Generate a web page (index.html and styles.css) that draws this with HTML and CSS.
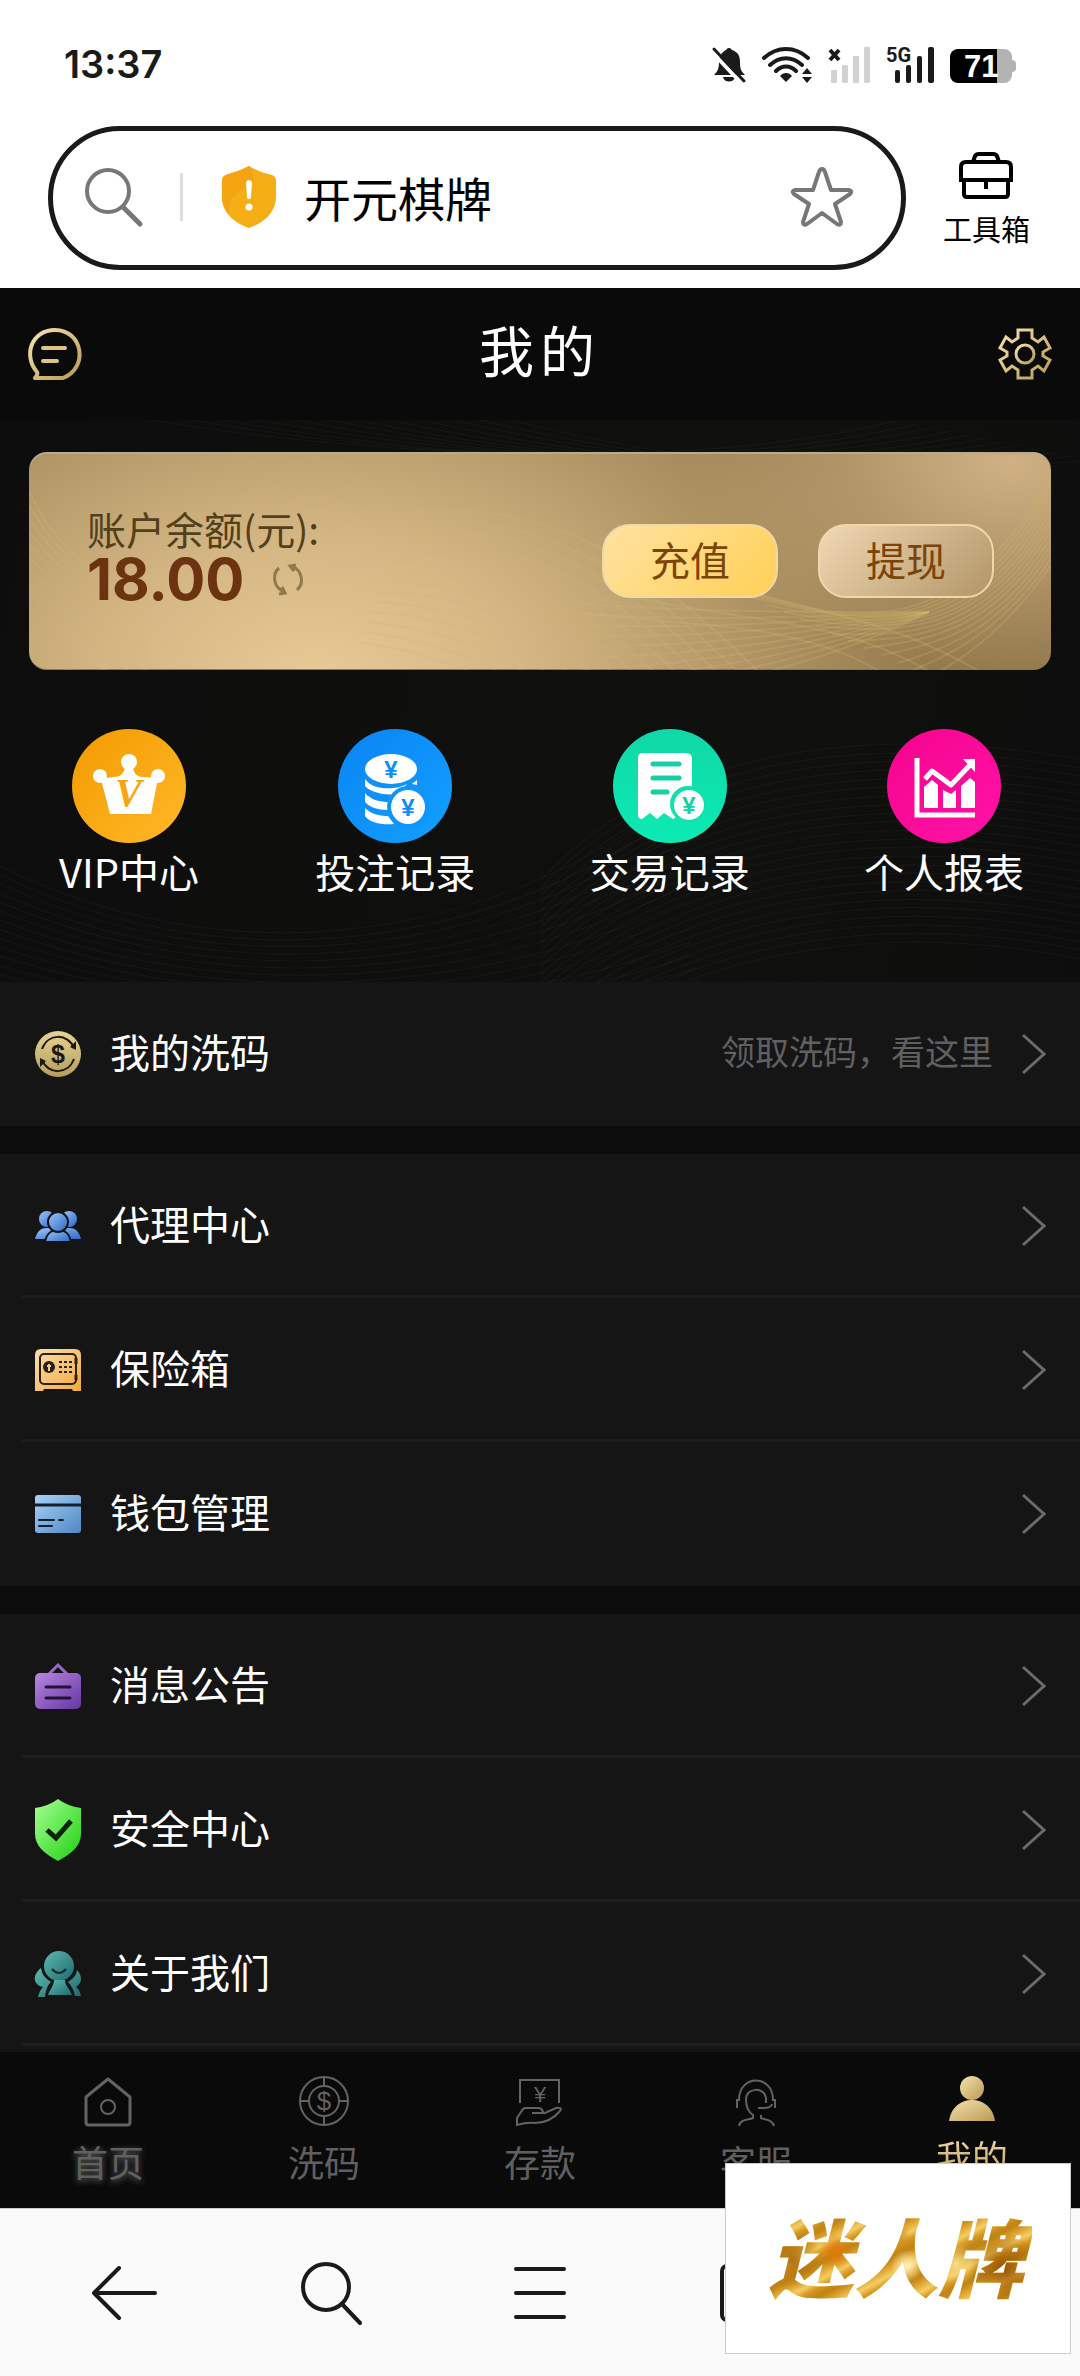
FILE: index.html
```html
<!DOCTYPE html>
<html lang="zh-CN">
<head>
<meta charset="utf-8">
<meta name="viewport" content="width=device-width, initial-scale=1">
<title>我的</title>
<link rel="stylesheet" href="styles.css">
</head>
<body>
<svg class="defs" aria-hidden="true">
  <defs>
    <linearGradient id="gold" x1="0" y1="0" x2="1" y2="1"><stop offset="0" stop-color="#f6e2b0"/><stop offset="1" stop-color="#b99a52"/></linearGradient>
    <linearGradient id="coin" x1="0" y1="0" x2="0" y2="1"><stop offset="0" stop-color="#e6d493"/><stop offset="1" stop-color="#b59c5c"/></linearGradient>
    <linearGradient id="blue" x1="0" y1="0" x2="1" y2="1"><stop offset="0" stop-color="#9fc6fb"/><stop offset="1" stop-color="#2b68c6"/></linearGradient>
    <linearGradient id="amber" x1="0" y1="0" x2="1" y2="1"><stop offset="0" stop-color="#fbdfae"/><stop offset="1" stop-color="#f3a83f"/></linearGradient>
    <linearGradient id="sky" x1="0" y1="0" x2="1" y2="1"><stop offset="0" stop-color="#a9d3f5"/><stop offset="1" stop-color="#4f86c6"/></linearGradient>
    <linearGradient id="violet" x1="0" y1="0" x2="1" y2="1"><stop offset="0" stop-color="#b888e0"/><stop offset="1" stop-color="#6535a4"/></linearGradient>
    <linearGradient id="green" x1="0" y1="0" x2="1" y2="1"><stop offset="0" stop-color="#a6ff93"/><stop offset="1" stop-color="#1fd010"/></linearGradient>
    <linearGradient id="teal" x1="0" y1="0" x2="1" y2="1"><stop offset="0" stop-color="#5cb8ae"/><stop offset="1" stop-color="#1f6a70"/></linearGradient>
    <linearGradient id="q1" x1="0" y1="0" x2="1" y2="1"><stop offset="0" stop-color="#f39a00"/><stop offset="1" stop-color="#ffb928"/></linearGradient>
    <linearGradient id="q2" x1="0" y1="0" x2="1" y2="1"><stop offset="0" stop-color="#0a84f5"/><stop offset="1" stop-color="#12a0ff"/></linearGradient>
    <linearGradient id="q3" x1="0" y1="0" x2="0" y2="1"><stop offset="0" stop-color="#10d8a6"/><stop offset="1" stop-color="#0ceab4"/></linearGradient>
    <linearGradient id="q4" x1="0" y1="0" x2="1" y2="1"><stop offset="0" stop-color="#f5048c"/><stop offset="1" stop-color="#ff12a8"/></linearGradient>
    <symbol id="chevron" viewBox="0 0 24 42"><path d="M1 2 22 21 1 40" fill="none" stroke="#6b6b6b" stroke-width="3"/></symbol>
  </defs>
</svg>

<header class="browser-top">
  <div class="status">
    <time class="clock">13:37</time>
    <div class="status-icons">
      <svg width="34" height="37" viewBox="0 0 34 37"><path d="M17 2c2 0 2 1 3 2 6 2 8 6 8 12 0 7 1 9 5 13H2c4-4 5-7 5-13 0-6 3-10 7-12 1-1 1-2 3-2z" fill="#1a1a1a"/><path d="M11 31h12c-1 6-11 6-12 0z" fill="#1a1a1a"/><path d="M-1 5 31 39" stroke="#fff" stroke-width="4"/><path d="M2 3 32 35" stroke="#1a1a1a" stroke-width="3" stroke-linecap="round"/></svg>
      <svg width="50" height="37" viewBox="0 0 50 37"><g fill="none" stroke="#1a1a1a" stroke-width="4" stroke-linecap="round"><path d="M2 12c13-12 31-12 44 0M8 19c10-9 22-9 32 0M14 25c6-6 14-6 20 0"/></g><path d="M24 36l-6-6c3-4 9-4 12 0z" fill="#1a1a1a"/><path d="M45 22l5 6h-10zM45 37l5-6h-10z" fill="#1a1a1a"/></svg>
      <svg width="42" height="37" viewBox="0 0 42 37"><path d="M2 4l9 10M11 4 2 14" stroke="#1a1a1a" stroke-width="4"/><g fill="#d2d2d2"><rect x="3" y="24" width="6" height="13" rx="1"/><rect x="14" y="19" width="6" height="18" rx="1"/><rect x="25" y="10" width="6" height="27" rx="1"/><rect x="36" y="1" width="6" height="36" rx="1"/></g></svg>
      <svg width="48" height="37" viewBox="0 0 48 37"><text x="0" y="16" class="net">5G</text><g fill="#1a1a1a"><rect x="9" y="24" width="5" height="13" rx="2"/><rect x="20" y="19" width="5" height="18" rx="2"/><rect x="31" y="10" width="5" height="27" rx="2"/><rect x="42" y="1" width="6" height="36" rx="2"/></g></svg>
      <svg width="66" height="37" viewBox="0 0 66 37"><rect x="50" y="14" width="16" height="12" rx="4" fill="#b3b3b3"/><rect x="20" y="3" width="42" height="34" rx="8" fill="#b3b3b3"/><path d="M8 3h39v34H8a8 8 0 0 1-8-8V11a8 8 0 0 1 8-8z" fill="#000"/><text x="14" y="31" class="charge">71</text></svg>
    </div>
  </div>
  <div class="address-row">
    <form class="address">
      <svg width="58" height="58" viewBox="0 0 58 58" fill="none" stroke="#777" stroke-width="4" stroke-linecap="round"><circle cx="23" cy="23" r="21"/><path d="M38 39 55 56" stroke-width="5"/></svg>
      <span class="divider"></span>
      <svg width="54" height="62" viewBox="0 0 54 62"><path d="M27 0c8 5 15 7 23 9 3 1 4 3 4 6v16c0 15-12 26-27 31C12 57 0 46 0 31V15c0-3 1-5 4-6 8-2 15-4 23-9z" fill="#f5ae15"/><path d="M27 0C15 6 8 7 4 9c-3 1-4 3-4 6v16c0 7 3 13 7 18-1-17 7-22 16-25 9-4 11-13 4-24z" fill="#f3a410"/><path d="M24 17c0-4 6-4 6 0l-1 14c0 3-4 3-4 0z" fill="#fff"/><circle cx="27" cy="41" r="3.500" fill="#fff"/></svg>
      <input class="address-input" type="text" value="开元棋牌" aria-label="搜索">
      <svg width="62" height="60" viewBox="0 0 62 60" fill="none" stroke="#777" stroke-width="4" stroke-linejoin="round"><path d="M31 2q2 0 3 3l6 18 18 0q4 1 1 4L44 37l6 18q0 4-4 2L31 46 16 57q-4 2-4-2l6-18L3 27q-3-3 1-4l18 0 6-18q1-3 3-3z"/></svg>
    </form>
    <button class="toolbox" type="button">
      <svg width="54" height="47" viewBox="0 0 54 47" fill="none" stroke="#000" stroke-width="4"><path d="M14 10l2-6q1-2 4-2h14q3 0 4 2l2 6"/><path d="M2 28V15q0-5 5-5h40q5 0 5 5v13z"/><path d="M5 28v14q0 3 3 3h38q3 0 3-3V28M27 28v9"/></svg>
      <span>工具箱</span>
    </button>
  </div>
</header>

<div class="app">
  <header class="app-header">
    <button type="button" class="icon-button" aria-label="消息"><svg width="52" height="52" viewBox="0 0 52 52" fill="none" stroke="url(#gold)" stroke-width="4"><path d="M6 50H34C60 40 54 2 26 2 2 2-6 28 8 44c1 2 0 4-2 6z" stroke-linejoin="round"/><path d="M14 20H36M14 33H28" stroke="#dcc486" stroke-linecap="round"/></svg></button>
    <h1>我的</h1>
    <button type="button" class="icon-button" aria-label="设置"><svg width="52" height="52" viewBox="0 0 52 52" fill="none" stroke="url(#gold)" stroke-width="3"><path d="M19 2h14v8l6 4 6-5 6 11-7 4v4l7 4-6 11-6-5-6 4v8H19v-8l-6-4-6 5L1 32l7-4v-4L1 20 7 9l6 5 6-4z"/><circle cx="26" cy="26" r="9"/></svg></button>
  </header>

  <section class="hero">
    <svg class="waves" id="hero-waves" viewBox="0 0 1080 561" preserveAspectRatio="none" aria-hidden="true"></svg>
    <div class="card">
      <svg class="waves" id="card-waves" viewBox="0 0 1022 218" preserveAspectRatio="none" aria-hidden="true"></svg>
      <div class="balance">
        <p class="balance-label">账户余额(元):</p>
        <p class="balance-value">18.00
          <button type="button" class="icon-button" aria-label="刷新"><svg width="30" height="30" viewBox="0 0 30 30" fill="none" stroke="#8f7a4c" stroke-width="3"><path d="M6 4C-1 10 0 23 11 28M9 23l3 6-6 1M24 26C31 20 30 7 19 2M21 7l-4-5 6-1"/></svg></button>
        </p>
      </div>
      <div class="actions">
        <button type="button" class="pill deposit">充值</button>
        <button type="button" class="pill withdraw">提现</button>
      </div>
    </div>
    <nav class="quick">
      <a href="#vip"><svg width="114" height="114" viewBox="0 0 114 114"><circle cx="57" cy="57" r="57" fill="url(#q1)"/><g fill="#fff"><circle cx="57" cy="33" r="8"/><circle cx="28" cy="47" r="7"/><circle cx="86" cy="47" r="7"/><path d="M53 38h8c1 8 5 10 11 10l14 1-7 36H38L29 50l12-2c7 0 11-3 12-10z"/></g><text x="43" y="77" class="vmark">V</text></svg>VIP中心</a>
      <a href="#bets"><svg width="114" height="114" viewBox="0 0 114 114"><circle cx="57" cy="57" r="57" fill="url(#q2)"/><g fill="#fff"><ellipse cx="53" cy="40" rx="26" ry="15"/><path d="M27 50c8 12 32 11 42 5l-9 10c-14 2-28-2-33-8zM27 64c6 7 15 9 25 9l-2 8c-10 0-19-3-23-8zM27 79c6 6 14 8 23 8l6 8c-12 1-24-1-29-8zM74 55l5-4v5z"/></g><circle cx="70" cy="78" r="21" fill="#0f95fb"/><circle cx="70" cy="78" r="17" fill="#fff"/><text x="53" y="49" class="yen yen-blue">¥</text><text x="70" y="87" class="yen yen-blue">¥</text></svg>投注记录</a>
      <a href="#trades"><svg width="114" height="114" viewBox="0 0 114 114"><circle cx="57" cy="57" r="57" fill="url(#q3)"/><path d="M30 24h43q6 0 6 6v58l-9-3-10 5-9-6-7 6-7-6-8 6q-4 0-4-4V29q0-5 5-5z" fill="#fff"/><path d="M40 35h26M40 49h26M40 63h14" stroke="#16cfa2" stroke-width="5" stroke-linecap="round"/><circle cx="75" cy="75" r="18" fill="#0fe0ac"/><path d="M62 88h18v6H62z" fill="#0fe3ae"/><circle cx="76" cy="76" r="15" fill="#fff"/><text x="76" y="85" class="yen yen-green">¥</text></svg>交易记录</a>
      <a href="#report"><svg width="114" height="114" viewBox="0 0 114 114"><circle cx="57" cy="57" r="57" fill="url(#q4)"/><g fill="none" stroke="#fff" stroke-width="5"><path d="M30 29v57h58"/><path d="M38 50l7-8 19 14 19-20" stroke-linejoin="round"/></g><g fill="#fff"><path d="M76 30h12v13zM37 58l8-7 6 5v23H37zM56 61l8 4 5-4v18H56zM74 57l9-8 5 4v26H74z"/></g></svg>个人报表</a>
    </nav>
  </section>

  <main class="menu">
    <ul class="group">
      <li><a class="row" href="#rebate"><span class="row-icon"><svg width="46" height="48" viewBox="0 0 46 48"><circle cx="23" cy="24" r="23" fill="url(#coin)"/><g fill="none" stroke="#1c1810" stroke-width="2"><path d="M7 19C13 3 33 3 39 18M39 29C33 45 13 45 7 30"/></g><path d="M41 11v9l-6-3zM5 37v-9l6 3z" fill="#1c1810"/><text x="23" y="33" class="dollar">$</text></svg></span><span class="row-label">我的洗码</span><span class="row-hint">领取洗码，看这里</span><svg class="chevron"><use href="#chevron"/></svg></a></li>
    </ul>
    <ul class="group">
      <li><a class="row" href="#agent"><span class="row-icon"><svg width="46" height="30" viewBox="0 0 46 30"><g fill="url(#blue)"><circle cx="12" cy="8" r="8"/><circle cx="34" cy="8" r="8"/><path d="M0 28c2-8 6-11 12-11h22c6 0 10 3 12 11z"/></g><g fill="url(#blue)" stroke="#151515" stroke-width="2"><path d="M10 31c2-10 7-12 13-12s11 2 13 12z"/><circle cx="23" cy="11" r="10"/></g></svg></span><span class="row-label">代理中心</span><svg class="chevron"><use href="#chevron"/></svg></a></li>
      <li><a class="row" href="#safe"><span class="row-icon"><svg width="46" height="42" viewBox="0 0 46 42"><path d="M6 0h34q6 0 6 6v36h-8l-1-2H9l-1 2H0V6q0-6 6-6z" fill="url(#amber)"/><rect x="5" y="5" width="36" height="30" rx="4" fill="none" stroke="#2a2114" stroke-width="2"/><circle cx="14" cy="18" r="6" fill="#2a2114"/><path d="M14 15v7M12 17h4" stroke="#f7c983" stroke-width="2"/><path d="M24 13h13M24 18h13M24 23h13" stroke="#2a2114" stroke-width="2" stroke-dasharray="3 2"/><path d="M41 9v6M41 26v5" stroke="#2a2114" stroke-width="3"/></svg></span><span class="row-label">保险箱</span><svg class="chevron"><use href="#chevron"/></svg></a></li>
      <li><a class="row" href="#wallet"><span class="row-icon"><svg width="46" height="38" viewBox="0 0 46 38"><rect width="46" height="38" rx="3" fill="url(#sky)"/><path d="M0 10h46" stroke="#16202c" stroke-width="3"/><path d="M4 25h15M24 25h4M4 31h13" stroke="#16202c" stroke-width="2" stroke-linecap="round"/></svg></span><span class="row-label">钱包管理</span><svg class="chevron"><use href="#chevron"/></svg></a></li>
    </ul>
    <ul class="group">
      <li><a class="row" href="#news"><span class="row-icon"><svg width="46" height="46" viewBox="0 0 46 46"><path d="M14 11l9-9 9 9" fill="none" stroke="#9a68c8" stroke-width="3"/><rect y="10" width="46" height="36" rx="5" fill="url(#violet)"/><path d="M11 24h24M11 35h24" stroke="#231036" stroke-width="3" stroke-linecap="round"/></svg></span><span class="row-label">消息公告</span><svg class="chevron"><use href="#chevron"/></svg></a></li>
      <li><a class="row" href="#security"><span class="row-icon"><svg width="46" height="62" viewBox="0 0 46 62"><path d="M23 0q9 7 23 9v26c0 12-10 20-23 27C10 55 0 47 0 35V9q14-2 23-9z" fill="url(#green)"/><path d="M12 31l9 8 15-17" fill="none" stroke="#0e220e" stroke-width="5"/></svg></span><span class="row-label">安全中心</span><svg class="chevron"><use href="#chevron"/></svg></a></li>
      <li><a class="row" href="#about"><span class="row-icon"><svg width="46" height="46" viewBox="0 0 46 46"><g fill="url(#teal)"><circle cx="24" cy="15" r="15"/><path d="M19 29h11c0 6 5 9 7 15H13c2-6 6-9 6-15z"/><path d="M6 17c1 8 6 11 10 14-4 4-5 8-6 15H3c1-4 2-7 5-10-10-2-11-12-2-19zM42 19c-1 7-5 9-9 12 4 4 6 9 7 14h6c-1-4-2-7-5-9 7-4 6-12 1-17z"/></g><path d="M17 18q7 8 14 0" fill="none" stroke="#12302f" stroke-width="2"/></svg></span><span class="row-label">关于我们</span><svg class="chevron"><use href="#chevron"/></svg></a></li>
    </ul>
  </main>

  <nav class="tabs">
    <a class="tab home" href="#home"><svg width="50" height="50" viewBox="0 0 50 50" fill="none" stroke="#636363" stroke-width="3" stroke-linejoin="round"><path d="M25 3 47 21v25q0 3-3 3H6q-3 0-3-3V21z"/><circle cx="25" cy="31" r="7" stroke-width="2"/></svg>首页</a>
    <a class="tab" href="#wash"><svg width="50" height="50" viewBox="0 0 50 50" fill="none" stroke="#636363" stroke-width="2"><circle cx="25" cy="25" r="24"/><circle cx="25" cy="25" r="15"/><path d="M25 1v9M25 40v9M1 25h9M40 25h9"/><text x="25" y="34" class="tab-glyph dollar-tab">$</text></svg>洗码</a>
    <a class="tab" href="#deposit"><svg width="50" height="50" viewBox="0 0 50 50" fill="none" stroke="#636363" stroke-width="2"><path d="M5 27V4h39v23"/><text x="25" y="26" class="tab-glyph">¥</text><path d="M2 49V42l6-9q1-1 3-1h13q4 1 4 5H17h13l11-5q7-1 4 3-10 12-25 12-8-1-18 2z"/></svg>存款</a>
    <a class="tab" href="#service"><svg width="50" height="50" viewBox="0 0 50 50" fill="none" stroke="#636363" stroke-width="2"><path d="M6 32V24h2C8-2 42-2 42 24h2v8M35 27v-5c-2-12-20-10-20 1 0 8 2 13 7 16v3c-4 2-13 1-14 8M27 32h6q7 0 8-4M30 39v3c4 2 11 1 13 8"/></svg>客服</a>
    <a class="tab active" href="#me" aria-current="page"><svg width="50" height="45" viewBox="0 0 50 45" fill="url(#gold)"><circle cx="25" cy="12" r="12"/><path d="M2 45C4 31 14 24 25 24s21 7 23 21z"/></svg><span>我的</span></a>
  </nav>
</div>

<footer class="browser-bar">
  <button type="button" aria-label="后退"><svg width="66" height="56" viewBox="0 0 66 56"><path d="M64 28H3M28 3 3 28l25 25"/></svg></button>
  <button type="button" aria-label="搜索"><svg width="62" height="64" viewBox="0 0 62 64"><circle cx="25" cy="26" r="23"/><path d="M41 43 59 62"/></svg></button>
  <button type="button" aria-label="菜单"><svg width="54" height="54" viewBox="0 0 54 54"><path d="M3 3h48M3 27h48M3 51h48"/></svg></button>
  <button type="button" aria-label="标签页"><svg width="58" height="58" viewBox="0 0 58 58"><rect x="3" y="2" width="52" height="54" rx="5"/></svg></button>
  <button type="button" aria-label="主页"><svg width="58" height="58" viewBox="0 0 58 58"><path d="M29 3 55 24v31H3V24z"/></svg></button>
</footer>

<aside class="badge"><span>迷人牌</span></aside>
<script src="waves.js"></script>
</body>
</html>
```
FILE: styles.css
```css
* { box-sizing: border-box; margin: 0; padding: 0; }

body {
  min-height: 100vh;
  display: flex;
  flex-direction: column;
  background: #0c0c0c;
  color: #fff;
  font-family: "Noto Sans CJK SC", "Noto Sans", sans-serif;
}

button { border: 0; background: none; color: inherit; font: inherit; cursor: pointer; }
a { color: inherit; text-decoration: none; }
ul { list-style: none; }
svg { display: block; flex: none; overflow: visible; }
.defs { position: absolute; width: 0; height: 0; }

/* browser chrome, top */
.browser-top { background: #fff; color: #1a1a1a; }
.status {
  display: flex;
  justify-content: space-between;
  align-items: center;
  padding: 46px 64px 43px;
}
.clock { font: 600 38px/37px Inter, sans-serif; }
.status-icons { display: flex; gap: 16px; }
.net { font: 700 20px Roboto, sans-serif; fill: #1a1a1a; }
.charge { font: 700 31px "Liberation Sans", sans-serif; fill: #fff; }

.address-row {
  display: flex;
  align-items: flex-start;
  gap: 37px;
  padding: 0 50px 18px 48px;
}
.address {
  flex: 1;
  min-width: 0;
  height: 144px;
  display: flex;
  align-items: center;
  padding: 0 48px 2px 32px;
  border: 5px solid #1a1a1a;
  border-radius: 72px;
}
.divider { flex: none; width: 3px; height: 48px; margin: 0 39px 0 37px; background: #dedede; }
.address-input {
  flex: 1;
  min-width: 0;
  height: 72px;
  padding-left: 28px;
  border: 0;
  outline: 0;
  background: none;
  color: #000;
  font: 400 47px/72px "Noto Sans CJK SC", sans-serif;
}
.toolbox {
  display: flex;
  flex-direction: column;
  align-items: center;
  gap: 9px;
  padding-top: 26px;
  color: #000;
  font-size: 29px;
  line-height: 40px;
}

/* app */
.app { flex: 1; display: flex; flex-direction: column; }
.app-header {
  height: 132px;
  display: flex;
  justify-content: space-between;
  align-items: center;
  padding: 0 29px;
  background: #0a0a0a;
}
.app-header h1 {
  padding-bottom: 12px;
  font-size: 55px;
  font-weight: 400;
  line-height: 72px;
  letter-spacing: 6px;
}

.hero {
  position: relative;
  padding: 32px 29px 86px;
  background: linear-gradient(100deg, #0d0d0d, #10100e 70%, #0d0d0d);
}
.waves { position: absolute; inset: 0; width: 100%; height: 100%; fill: none; overflow: hidden; }
#hero-waves { stroke: rgba(255, 255, 255, .04); }
#card-waves { stroke: rgba(214, 180, 112, .26); stroke-width: 2; }

.card {
  position: relative;
  overflow: hidden;
  min-height: 218px;
  display: flex;
  justify-content: space-between;
  align-items: center;
  padding: 0 57px 0 58px;
  border-radius: 18px;
  background:
    radial-gradient(ellipse 32% 95% at 96% 5%, #cfb184, rgba(207, 177, 132, 0)),
    radial-gradient(ellipse 60% 190% at 28% 105%, #e8ca95 0%, #d3b683 35%, #b39767 68%, rgba(150, 125, 80, 0) 100%),
    #947a4d;
  box-shadow: inset 0 2px 0 #b9ab90, inset 0 -1px 0 #8c7850;
}
.balance, .actions { position: relative; }
.balance { padding-bottom: 14px; }
.balance-label { color: #52401a; font-size: 39px; line-height: 50px; }
.balance-value {
  display: flex;
  align-items: center;
  gap: 29px;
  color: #6b330f;
  font: 700 58px/52px Inter, sans-serif;
}
.actions { display: flex; gap: 40px; }
.pill {
  width: 176px;
  height: 74px;
  padding-bottom: 4px;
  border: 2px solid #f0d8a8;
  border-radius: 28px;
  color: #7c4406;
  font-size: 40px;
  line-height: 64px;
}
.deposit { background: linear-gradient(135deg, #ffe2a2, #ffd055); }
.withdraw { background: linear-gradient(135deg, #f0d8b4, #b29668); }

.quick {
  position: relative;
  display: flex;
  justify-content: space-between;
  padding: 59px 27px 0 28px;
}
.quick a {
  min-width: 144px;
  display: flex;
  flex-direction: column;
  align-items: center;
  gap: 3px;
  font-size: 40px;
  line-height: 50px;
}
.vmark { font: italic 700 40px "Liberation Serif", serif; fill: #f8a610; }
.yen { font: 700 24px "Liberation Sans", sans-serif; text-anchor: middle; }
.yen-blue { fill: #0c8df8; }
.yen-green { fill: #16cfa2; }

/* list */
.menu { display: flex; flex-direction: column; gap: 28px; flex: 1; }
.group { background: #151515; }
.group:last-child { flex: 1; padding-bottom: 5px; }
.group li { padding-left: 22px; }
.row {
  height: 144px;
  display: flex;
  align-items: center;
  padding: 0 34px 0 13px;
  border-bottom: 3px solid #1d1d1d;
}
.group:not(:last-child) li:last-child .row { border-color: transparent; }
.row-icon { width: 46px; margin: 3px 29px 0 0; }
.row-label { flex: 1; font-size: 40px; line-height: 56px; padding-bottom: 3px; }
.row-hint { margin-right: 29px; padding-bottom: 3px; color: #606060; font-size: 34px; line-height: 48px; }
.chevron { width: 24px; height: 42px; margin-top: 3px; }
.dollar { font: 700 25px "Liberation Sans", sans-serif; fill: #1c1810; text-anchor: middle; }

/* tabs */
.tabs { display: grid; grid-template-columns: repeat(5, 1fr); height: 156px; background: #0a0a0a; }
.tab {
  display: flex;
  flex-direction: column;
  align-items: center;
  gap: 13px;
  padding-top: 24px;
  color: #606060;
  font-size: 36px;
  line-height: 44px;
}
.home { text-shadow: 0 2px 6px #666; }
.active span {
  background: linear-gradient(#f3dfae, #b99a52);
  background-clip: text;
  color: transparent;
}
.tab-glyph { font: 400 22px "Liberation Sans", sans-serif; text-anchor: middle; fill: #636363; stroke: none; }
.dollar-tab { font-size: 26px; }

/* browser chrome, bottom */
.browser-bar {
  height: 168px;
  display: grid;
  grid-template-columns: repeat(5, 1fr);
  padding: 0 20px;
  border-top: 1px solid #ccc;
  background: #fafafa;
}
.browser-bar button { display: grid; place-items: center; }
.browser-bar svg { fill: none; stroke: #1a1a1a; stroke-width: 4; stroke-linecap: round; stroke-linejoin: round; }

.badge {
  position: fixed;
  right: 9px;
  bottom: 22px;
  width: 346px;
  height: 191px;
  display: grid;
  place-items: center;
  padding-bottom: 10px;
  padding-right: 4px;
  border: 1px solid #ccc;
  background: #fff;
}
.badge span {
  padding: 0 8px;
  background:
    radial-gradient(circle at 28% 48%, #e0780a 0, rgba(224, 120, 10, 0) 9%),
    radial-gradient(circle at 12% 55%, #b0700c 0, rgba(176, 112, 12, 0) 12%),
    radial-gradient(circle at 54% 60%, #fff0b8 0, rgba(255, 240, 184, 0) 10%),
    radial-gradient(circle at 50% 36%, #c98a1c 0, rgba(201, 138, 28, 0) 10%),
    radial-gradient(circle at 72% 58%, #f7dc84 0, rgba(247, 220, 132, 0) 10%),
    radial-gradient(circle at 90% 62%, #9c5804 0, rgba(156, 88, 4, 0) 14%),
    repeating-linear-gradient(152deg, #c28618 0 3px, #dda22c 9px, #f3cd66 17px, #d99a22 23px, #c28618 29px);
  background-clip: text;
  color: transparent;
  font-size: 85px;
  font-style: italic;
  font-weight: 900;
  line-height: 120px;
}
```
FILE: waves.js
```js
// Fills an svg with a family of curves blended between two cubic outlines.
function family(id, from, to, count) {
  const svg = document.getElementById(id);
  for (let i = 0; i < count; i++) {
    const t = i / (count - 1);
    const p = from.map((v, k) => Math.round(v + (to[k] - v) * t));
    const path = document.createElementNS("http://www.w3.org/2000/svg", "path");
    path.setAttribute("d", `M${p[0]} ${p[1]}C${p.slice(2).join(" ")}`);
    svg.appendChild(path);
  }
}

family("card-waves", [690, 131, 800, 165, 920, 210, 1024, 20], [900, 225, 950, 200, 990, 160, 1024, 110], 14);
family("card-waves", [690, 131, 800, 165, 860, 165, 960, 225], [480, 150, 640, 180, 760, 160, 860, 225], 3);
family("card-waves", [540, 150, 640, 160, 760, 160, 900, 160], [560, 250, 680, 240, 800, 210, 900, 160], 10);
family("card-waves", [380, 60, 520, 50, 610, 100, 740, 230], [330, 190, 400, 200, 450, 220, 480, 240], 14);
family("card-waves", [0, 40, 30, 100, 60, 120, 120, 150], [0, 210, 60, 220, 90, 230, 120, 240], 14);
family("hero-waves", [-10, 440, 220, 560, 480, 520, 660, 390], [-10, 560, 220, 620, 480, 620, 700, 560], 14);
family("hero-waves", [540, 460, 660, 330, 860, 300, 1090, 340], [540, 640, 700, 520, 900, 500, 1090, 540], 24);
family("hero-waves", [150, 0, 400, 40, 700, 50, 900, 0], [400, -30, 700, 60, 900, 60, 1090, 40], 12);
```
